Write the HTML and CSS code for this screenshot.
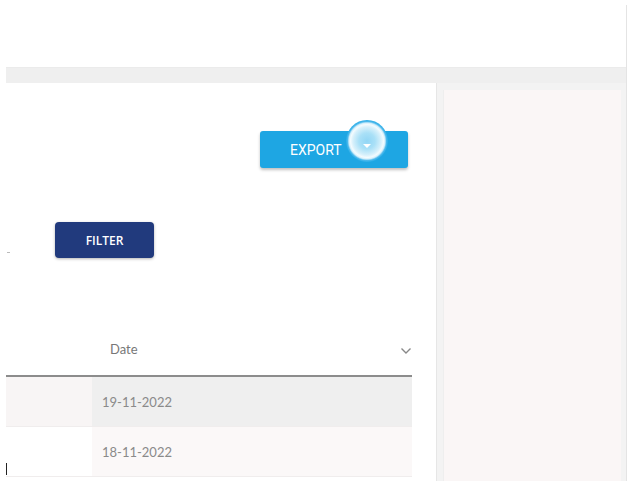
FILE: index.html
```html
<!DOCTYPE html>
<html lang="en">
<head>
  <meta charset="UTF-8" />
  <meta name="viewport" content="width=device-width, initial-scale=1" />
  <title>Reports</title>
  <link rel="stylesheet" href="styles.css">
</head>
<body>
  <div class="frame">
    <div class="topbar"></div>
    <div class="band"></div>

    <main>
      <section class="card">
        <div class="actions">
          <button class="export">
            <span>EXPORT</span>
            <span class="ripple"><span class="caret"></span></span>
          </button>
        </div>

        <div class="filters">
          <span class="dash"></span>
          <button class="filter">FILTER</button>
        </div>

        <table class="grid">
          <thead>
            <tr>
              <th class="blank"></th>
              <th>
                <div class="head-cell">
                  <span>Date</span>
                  <svg width="12" height="8" viewBox="0 0 12 8"><path d="M1.5 1.5 6 6l4.5-4.5" fill="none" stroke="#888" stroke-width="1.4"/></svg>
                </div>
              </th>
            </tr>
          </thead>
          <tbody>
            <tr class="selected">
              <td class="blank"></td>
              <td>19-11-2022</td>
            </tr>
            <tr>
              <td class="blank"><span class="cursor"></span></td>
              <td>18-11-2022</td>
            </tr>
          </tbody>
        </table>
      </section>

      <aside class="side"></aside>
    </main>
  </div>
</body>
</html>
```

FILE: styles.css
```css
body {
  margin: 0;
  background: #ffffff;
  font-family: 'Lato', sans-serif;
  overflow: hidden;
}

.frame {
  width: 626px;
  height: 476px;
  margin-top: 5px;
  border-right: 1px solid #e4e4e4;
  display: flex;
  flex-direction: column;
}

.topbar {
  height: 62px;
}

.band {
  height: 16px;
  margin-left: 6px;
  background: #efefef;
  border-top: 1px solid #ebebeb;
  box-sizing: border-box;
}

main {
  flex: 1;
  display: flex;
  margin-left: 6px;
  background: #f3f3f3;
}

.card {
  width: 431px;
  background: #ffffff;
  border-right: 1px solid #e6e6e6;
  box-sizing: border-box;
  padding-top: 48px;
}

.actions {
  display: flex;
  justify-content: flex-end;
  padding-right: 28px;
}

.export {
  position: relative;
  width: 148px;
  height: 37px;
  border: none;
  border-radius: 3px;
  background: #1ea6e3;
  color: #ffffff;
  font-family: 'Roboto', sans-serif;
  font-size: 14px;
  text-align: left;
  padding: 0 0 0 30px;
  box-shadow: 0 2px 3px rgba(0, 0, 0, 0.25);
}

.ripple {
  position: absolute;
  left: 86px;
  top: -11px;
  width: 42px;
  height: 42px;
  border-radius: 50%;
  background: radial-gradient(circle closest-side, #92d6f5 0px, #a9e0f7 8px, #d6f0fb 14px, #f3fbfe 16.5px, #d4effb 18px, #4ab8ec 19.5px, #2aade7 21px);
  display: flex;
  align-items: center;
  justify-content: center;
}

.caret {
  width: 0;
  height: 0;
  border-left: 4px solid transparent;
  border-right: 4px solid transparent;
  border-top: 4px solid #ffffff;
  margin-top: 10px;
}

.filters {
  display: flex;
  align-items: center;
  margin-top: 54px;
  height: 36px;
}

.dash {
  width: 3px;
  height: 1px;
  background: #bbbbbb;
  margin: 24px 0 0 1px;
}

.filter {
  margin-left: 45px;
  width: 99px;
  height: 36px;
  border: none;
  border-radius: 4px;
  background: #213a7d;
  color: #ffffff;
  font-family: 'Open Sans', sans-serif;
  font-weight: 600;
  font-size: 12px;
  box-shadow: 0 1px 3px rgba(0, 0, 0, 0.3);
}

.grid {
  margin-top: 65px;
  width: 406px;
  border-collapse: collapse;
  font-size: 13px;
  color: #8a8a8a;
}

.grid th {
  height: 52px;
  border-bottom: 2px solid #8c8c8c;
  font-weight: normal;
  text-align: left;
  color: #777777;
  padding: 0;
}

.head-cell {
  display: flex;
  align-items: center;
  justify-content: space-between;
  padding: 0 0 0 18px;
}

.head-cell svg {
  margin-top: 4px;
}

.grid .blank {
  width: 86px;
}

.grid td {
  height: 49px;
  padding: 0 0 0 10px;
  background: #fbf8f8;
  border-bottom: 1px solid #f0eded;
}

.grid td.blank {
  background: #ffffff;
  padding: 0;
  position: relative;
}

.grid tr.selected td {
  background: #efefef;
}

.grid tr.selected td.blank {
  background: #f8f5f5;
}

.cursor {
  position: absolute;
  left: 0;
  top: 36px;
  width: 1px;
  height: 12px;
  background: #222222;
}

.side {
  width: 177px;
  margin: 7px 0 0 6px;
  background: #faf6f6;
  border-left: 1px solid #eeeeee;
}
```
